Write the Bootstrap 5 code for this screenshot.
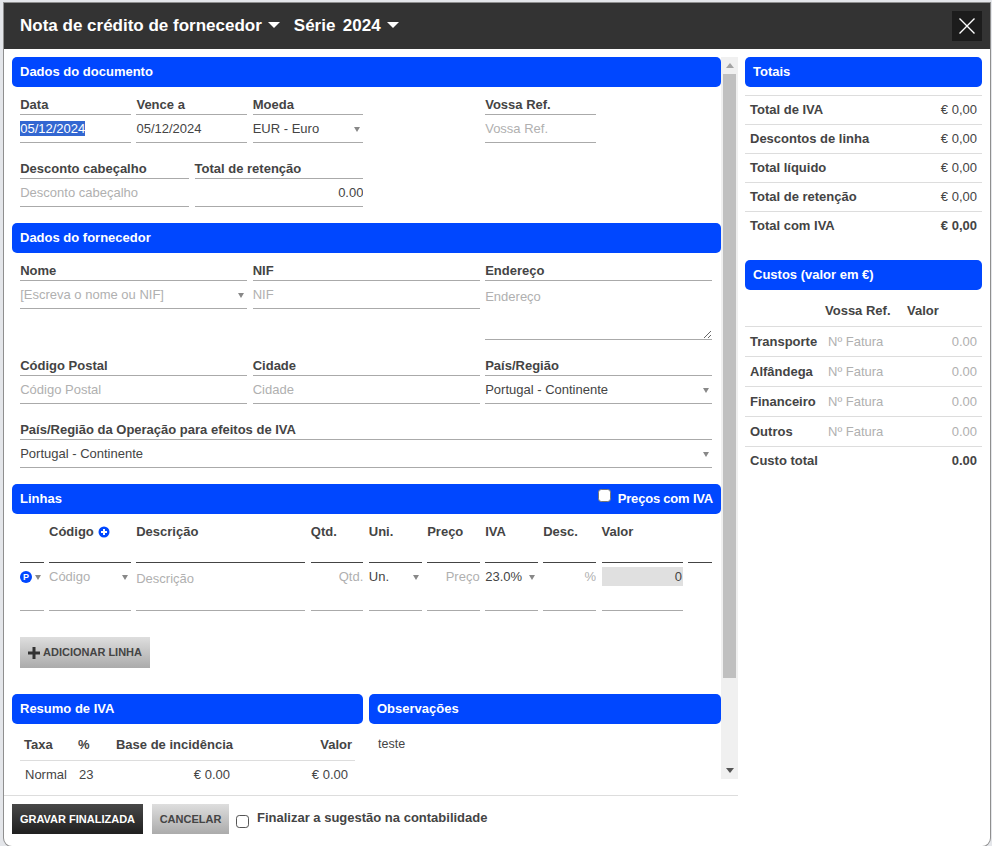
<!DOCTYPE html>
<html lang="pt">
<head>
<meta charset="utf-8">
<title>Nota de crédito de fornecedor</title>
<link href="https://cdn.jsdelivr.net/npm/bootstrap@5.3.0/dist/css/bootstrap.min.css" rel="stylesheet">
<style>
html,body{height:100%;overflow:hidden}
body{background:#e4e6ea;font-family:"Liberation Sans",Arial,sans-serif;font-size:13px;color:#444}
.dlg{margin:3px 2px 0 4px;height:843px;background:#fff;border-radius:0 0 8px 8px;box-shadow:0 0 0 1px #8f8f8f}
.dlg-head{height:46px;background:#333;color:#fff;padding:0 8px 0 16px}
.dlg-title{font-size:17px;font-weight:700;color:#fff;margin-right:14px}
.dlg-title.dropdown-toggle::after{margin-left:6px;vertical-align:.18em;border-top-width:6px;border-left-width:6px;border-right-width:6px}
.dlg-serie{word-spacing:-1px}
.dlg-close{width:30px;height:30px;background:#1c1c1c;border:0;padding:0}
.left-pane{width:734px;padding-top:8px}
.scroll-row{margin-left:8px;width:726px;height:722px}
.scroll-pane{width:709px;height:722px;overflow:hidden;flex:none}
.scroll-bar{width:17px;height:722px;background:#f0f0f0;flex:none}
.sb-btn{height:17px}
.sb-up{border-left:4px solid transparent;border-right:4px solid transparent;border-bottom:5px solid #a3a3a3}
.sb-down{border-left:4px solid transparent;border-right:4px solid transparent;border-top:5px solid #555}
.sb-thumb{height:604px;width:13px;margin-left:2px;background:#c0c0c0}
.sb-fill{flex:1 1 auto}
.scroll-inner{width:709px;height:822px}
.sec-bar{height:30px;background:#0047ff;color:#fff;font-weight:700;font-size:13px;padding:0 8px;border-radius:5px}
.sec-body{padding:8px 8.8px 16px 8.2px}
.fld-row{--bs-gutter-x:5.5px;--bs-gutter-y:0;margin-bottom:16px}
.fld-row:last-child{margin-bottom:0}
.fld-lab{height:20px;line-height:19px;font-weight:700;font-size:13px;color:#444;border-bottom:1px solid #aaa;white-space:nowrap}
.fld{display:block;width:100%;height:28px;border:0;border-bottom:1px solid #aaa;border-radius:0;padding:0;font-size:13px;color:#444;background:transparent;font-family:inherit;outline:0;box-shadow:none}
.fld:focus{border-color:#aaa;box-shadow:none;outline:0;color:#444;background:transparent}
.fld::placeholder{color:#b0b0b0;opacity:1}
.fld::selection{background:#3367d1;color:#fff}
select.fld{appearance:none;background-image:none;padding-top:1px}
.fld-area{height:59px;padding-top:6px;resize:vertical;min-height:0}
.sel-wrap{position:relative}
.sel-wrap::after{content:"";position:absolute;right:3px;top:12px;border-left:3px solid transparent;border-right:3px solid transparent;border-top:5px solid #888;pointer-events:none}
.lin-wrap{padding:0 9px 0 8px}
.lin-grid{display:grid;grid-template-columns:29px 87.2px 174.6px 58px 58.4px 58px 58px 58.4px 86.9px 29px;margin:0 -2.75px}
.lin-head{height:49px;padding-top:8px;line-height:20px;font-weight:700;border-bottom:1px solid #444;margin:0 2.75px}
.lin-cell{height:48px;border-bottom:1px solid #aaa;margin:0 2.75px;position:relative}
.lin-cell .fld{border-bottom:0;height:27px}
.lin-end{height:49px;margin:0 2.75px;border-bottom:1px solid #444}
.pbadge{width:12px;height:12px;border-radius:50%;background:#0047ff;color:#fff;font-size:9px;font-weight:700;line-height:12px;text-align:center}
.pcaret{border-left:3px solid transparent;border-right:3px solid transparent;border-top:5px solid #888;margin-left:3px}
.val-box{margin-top:4px;height:19px;background:#e0e0e0;text-align:right;line-height:19px;font-size:13px;padding-right:1px}
.btn-add,.btn-cancel{background:linear-gradient(#dedede,#ababab);color:#444;border:0;border-radius:0;font-weight:700;font-size:11px;padding:0}
.btn-add:hover,.btn-cancel:hover{background:linear-gradient(#dedede,#ababab);color:#444}
.btn-add{width:130px;height:31px;margin:26px 0 0 8px}
.add-icon{margin-right:3px}
.btn-save{width:131px;height:30px;background:linear-gradient(#484848,#1f1f1f);color:#fff;border:0;border-radius:0;font-weight:700;font-size:11px;padding:0}
.btn-save:hover{background:linear-gradient(#484848,#1f1f1f);color:#fff}
.btn-cancel{width:77px;height:30px;margin-left:9px}
.split-row{--bs-gutter-x:6px;margin-top:26px}
.iva-col{flex:0 0 357px;width:357px}
.iva-wrap{padding:6px 8px 0}
.iva-tab{width:335px;table-layout:fixed;margin:0;color:#444}
.iva-tab th{height:30px;font-weight:700;padding:0 3px 0 4px;border-bottom:1px solid #ddd}
.iva-tab td{height:28px;padding:0 7px 0 5px}
.iva-tab td:nth-child(3){padding-right:6px}
.obs-text{padding:11px 9px;font-size:12.5px}
.right-pane{width:237px;margin-left:7px;padding-top:8px}
.sum-tab{width:100%;margin:8px 0 0;color:#444}
.sum-tab td{height:29px;padding:0 5px;border-top:1px solid #ddd}
.sum-tab td:last-child{text-align:right}
.sum-tab tr:last-child td{padding-bottom:2px}
.bold{font-weight:700}
.costs{margin-top:19px}
.cost-tab{width:100%;table-layout:fixed;color:#444;margin:0}
.cost-tab th{height:37px;font-weight:700;padding:6px 0 0;vertical-align:middle}
.cost-tab td{height:30px;padding:0 5px;border-top:1px solid #ddd}
.cost-tab .lab{font-weight:700}
.cost-tab .ph{color:#b0b0b0;padding-left:6px}
.cost-tab .num{text-align:right}
.cost-tab tr:last-child td{padding-bottom:2px}
.cost-ref{padding-left:3px !important}
.foot-rule{margin:16px 0 0;border:0;border-top:1px solid #ddd;opacity:1}
.foot-bar{padding:8px 0 0 8px}
.foot-check{width:13px;height:13px;margin:11px 8px 0 7px;border-color:#555;border-radius:3px;flex:none}
.foot-lab{font-weight:700;font-size:13px}
.head-check{width:13px;height:13px;margin:0 7px 7px 0;border-radius:2px;border:1px solid #767676;flex:none}
.head-lab{letter-spacing:-.2px}
</style>
</head>
<body>
<div class="dlg">
  <div class="dlg-head d-flex align-items-center">
    <a class="dlg-title dropdown-toggle text-decoration-none" href="#">Nota de crédito de fornecedor</a>
    <a class="dlg-title dlg-serie dropdown-toggle text-decoration-none" href="#">Série&nbsp; 2024</a>
    <button class="dlg-close ms-auto d-flex align-items-center justify-content-center" aria-label="Fechar">
      <svg width="16" height="16" viewBox="0 0 16 16"><path d="M.5 .5L15.5 15.5M15.5 .5L.5 15.5" stroke="#fff" stroke-width="1.4" fill="none"/></svg>
    </button>
  </div>
  <div class="d-flex">
    <div class="left-pane">
      <div class="scroll-row d-flex">
      <div class="scroll-pane">
        <div class="scroll-inner">
          <div class="sec-bar d-flex align-items-center">Dados do documento</div>
          <div class="sec-body">
            <div class="row fld-row">
              <div class="col-2"><div class="fld-lab">Data</div><input id="dataInput" class="fld" value="05/12/2024"></div>
              <div class="col-2"><div class="fld-lab">Vence a</div><input class="fld" value="05/12/2024"></div>
              <div class="col-2"><div class="fld-lab">Moeda</div><div class="sel-wrap"><select class="fld"><option>EUR - Euro</option></select></div></div>
              <div class="col-2"></div>
              <div class="col-2"><div class="fld-lab">Vossa Ref.</div><input class="fld" placeholder="Vossa Ref."></div>
            </div>
            <div class="row fld-row">
              <div class="col-3"><div class="fld-lab">Desconto cabeçalho</div><input class="fld" placeholder="Desconto cabeçalho"></div>
              <div class="col-3"><div class="fld-lab">Total de retenção</div><input class="fld text-end" value="0.00"></div>
            </div>
          </div>
          <div class="sec-bar d-flex align-items-center">Dados do fornecedor</div>
          <div class="sec-body">
            <div class="row fld-row">
              <div class="col-4"><div class="fld-lab">Nome</div><div class="sel-wrap"><input class="fld" placeholder="[Escreva o nome ou NIF]"></div></div>
              <div class="col-4"><div class="fld-lab">NIF</div><input class="fld" placeholder="NIF"></div>
              <div class="col-4"><div class="fld-lab">Endereço</div><textarea class="fld fld-area" placeholder="Endereço"></textarea></div>
            </div>
            <div class="row fld-row">
              <div class="col-4"><div class="fld-lab">Código Postal</div><input class="fld" placeholder="Código Postal"></div>
              <div class="col-4"><div class="fld-lab">Cidade</div><input class="fld" placeholder="Cidade"></div>
              <div class="col-4"><div class="fld-lab">País/Região</div><div class="sel-wrap"><select class="fld"><option>Portugal - Continente</option></select></div></div>
            </div>
            <div class="row fld-row">
              <div class="col-12"><div class="fld-lab">País/Região da Operação para efeitos de IVA</div><div class="sel-wrap"><select class="fld"><option>Portugal - Continente</option></select></div></div>
            </div>
          </div>
          <div class="sec-bar d-flex align-items-center justify-content-between">
            <span>Linhas</span>
            <span class="d-flex align-items-center fw-bold head-lab"><input class="form-check-input head-check mt-0" type="checkbox">Preços com IVA</span>
          </div>
          <div class="lin-wrap">
            <div class="lin-grid">
              <div class="lin-head"></div>
              <div class="lin-head d-flex align-items-start gap-1">Código
                <svg class="mt-1" width="12" height="12" viewBox="0 0 12 12"><circle cx="6" cy="6" r="5.5" fill="#0047ff"/><path d="M6 3v6M3 6h6" stroke="#fff" stroke-width="2"/></svg>
              </div>
              <div class="lin-head">Descrição</div>
              <div class="lin-head">Qtd.</div>
              <div class="lin-head">Uni.</div>
              <div class="lin-head">Preço</div>
              <div class="lin-head">IVA</div>
              <div class="lin-head">Desc.</div>
              <div class="lin-head">Valor</div>
              <div class="lin-end"></div>

              <div class="lin-cell"><div class="d-flex align-items-center pt-2"><div class="pbadge">P</div><div class="pcaret"></div></div></div>
              <div class="lin-cell sel-wrap"><input class="fld" placeholder="Código"></div>
              <div class="lin-cell"><input class="fld pt-1" placeholder="Descrição"></div>
              <div class="lin-cell"><input class="fld text-end" placeholder="Qtd."></div>
              <div class="lin-cell sel-wrap"><select class="fld"><option>Un.</option></select></div>
              <div class="lin-cell"><input class="fld text-end" placeholder="Preço"></div>
              <div class="lin-cell sel-wrap"><select class="fld"><option>23.0%</option></select></div>
              <div class="lin-cell"><input class="fld text-end" placeholder="%"></div>
              <div class="lin-cell"><div class="val-box">0</div></div>
              <div></div>
            </div>
          </div>
          <button class="btn btn-add d-inline-flex align-items-center justify-content-center">
            <svg class="add-icon" width="12" height="12" viewBox="0 0 12 12"><path d="M4.5 0h3v4.5H12v3H7.5V12h-3V7.5H0v-3h4.5z" fill="#333"/></svg>ADICIONAR LINHA
          </button>
          <div class="row split-row">
            <div class="iva-col">
              <div class="sec-bar d-flex align-items-center">Resumo de IVA</div>
              <div class="iva-wrap">
                <table class="iva-tab">
                  <colgroup><col style="width:54px"><col style="width:32px"><col style="width:130px"><col></colgroup>
                  <tr><th>Taxa</th><th>%</th><th class="text-end">Base de incidência</th><th class="text-end">Valor</th></tr>
                  <tr><td>Normal</td><td>23</td><td class="text-end">€ 0,00</td><td class="text-end">€ 0,00</td></tr>
                </table>
              </div>
            </div>
            <div class="col">
              <div class="sec-bar d-flex align-items-center">Observações</div>
              <div class="obs-text">teste</div>
            </div>
          </div>
        </div>
      </div>
      <div class="scroll-bar d-flex flex-column" aria-hidden="true">
        <div class="sb-btn d-flex align-items-center justify-content-center"><div class="sb-up"></div></div>
        <div class="sb-thumb"></div>
        <div class="sb-fill"></div>
        <div class="sb-btn d-flex align-items-center justify-content-center"><div class="sb-down"></div></div>
      </div>
      </div>
      <hr class="foot-rule">
      <div class="foot-bar d-flex align-items-start">
        <button class="btn btn-save">GRAVAR FINALIZADA</button>
        <button class="btn btn-cancel">CANCELAR</button>
        <input class="form-check-input foot-check" type="checkbox" id="fin">
        <label class="foot-lab pt-1" for="fin">Finalizar a sugestão na contabilidade</label>
      </div>
    </div>
    <div class="right-pane">
      <div class="sec-bar d-flex align-items-center">Totais</div>
      <table class="sum-tab">
        <tr><td class="bold">Total de IVA</td><td>€ 0,00</td></tr>
        <tr><td class="bold">Descontos de linha</td><td>€ 0,00</td></tr>
        <tr><td class="bold">Total líquido</td><td>€ 0,00</td></tr>
        <tr><td class="bold">Total de retenção</td><td>€ 0,00</td></tr>
        <tr><td class="bold">Total com IVA</td><td class="bold">€ 0,00</td></tr>
      </table>
      <div class="costs">
        <div class="sec-bar d-flex align-items-center">Custos (valor em €)</div>
        <table class="cost-tab">
          <colgroup><col style="width:77px"><col style="width:85px"><col></colgroup>
          <tr><th></th><th class="cost-ref">Vossa Ref.</th><th>Valor</th></tr>
          <tr><td class="lab">Transporte</td><td class="ph">Nº Fatura</td><td class="ph num">0.00</td></tr>
          <tr><td class="lab">Alfândega</td><td class="ph">Nº Fatura</td><td class="ph num">0.00</td></tr>
          <tr><td class="lab">Financeiro</td><td class="ph">Nº Fatura</td><td class="ph num">0.00</td></tr>
          <tr><td class="lab">Outros</td><td class="ph">Nº Fatura</td><td class="ph num">0.00</td></tr>
          <tr><td class="lab" colspan="2">Custo total</td><td class="num bold">0.00</td></tr>
        </table>
      </div>
    </div>
  </div>
</div>
<script src="https://cdn.jsdelivr.net/npm/bootstrap@5.3.0/dist/js/bootstrap.bundle.min.js"></script>
<script>var d=document.getElementById('dataInput');d.focus();d.select();</script>
</body>
</html>
